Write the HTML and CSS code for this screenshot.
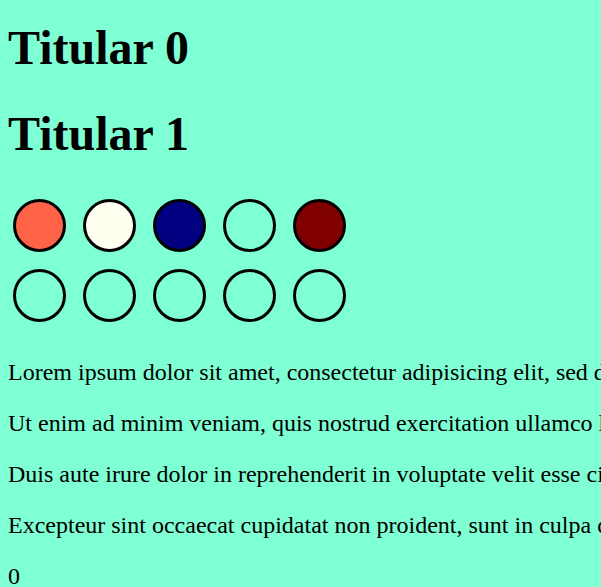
FILE: index.html
```html
<!DOCTYPE html>
<html>
<head>
<meta charset="utf-8">
<link rel="stylesheet" href="styles.css">
</head>
<body>
<h1 class="title title-first">Titular 0</h1>
<h1 class="title">Titular 1</h1>
<div class="dots">
  <div class="dot dot-tomato"></div>
  <div class="dot dot-ivory"></div>
  <div class="dot dot-navy"></div>
  <div class="dot"></div>
  <div class="dot dot-maroon"></div>
  <div class="dot"></div>
  <div class="dot"></div>
  <div class="dot"></div>
  <div class="dot"></div>
  <div class="dot"></div>
</div>
<p class="text">Lorem ipsum dolor sit amet, consectetur adipisicing elit, sed do eiusmod tempor incididunt ut labore et dolore magna aliqua.</p>
<p class="text">Ut enim ad minim veniam, quis nostrud exercitation ullamco laboris nisi ut aliquip ex ea commodo consequat.</p>
<p class="text">Duis aute irure dolor in reprehenderit in voluptate velit esse cillum dolore eu fugiat nulla pariatur.</p>
<p class="text">Excepteur sint occaecat cupidatat non proident, sunt in culpa qui officia deserunt mollit anim id est laborum.</p>
<p class="text">0</p>
</body>
</html>
```
FILE: styles.css
```css
html {
  background: #7fffd4;
  overflow: hidden;
}
body {
  margin: 0;
  padding: 0 8px;
  font-family: "Liberation Serif", "Times New Roman", serif;
  color: #000;
}
.title {
  font-size: 48px;
  font-weight: bold;
  margin: 31px 0;
}
.title-first {
  margin-top: 20px;
}
.dots {
  display: grid;
  grid-template-columns: repeat(5, 53px);
  gap: 17px;
  padding: 7px 0 13px 5px;
}
.dot {
  box-sizing: border-box;
  width: 53px;
  height: 53px;
  border: 3px solid #000;
  border-radius: 50%;
}
.dot-tomato { background: #ff6347; }
.dot-ivory { background: #fffff0; }
.dot-navy { background: #000080; }
.dot-maroon { background: #800000; }
.text {
  font-size: 24px;
  margin: 24px 0;
  white-space: nowrap;
}
```
